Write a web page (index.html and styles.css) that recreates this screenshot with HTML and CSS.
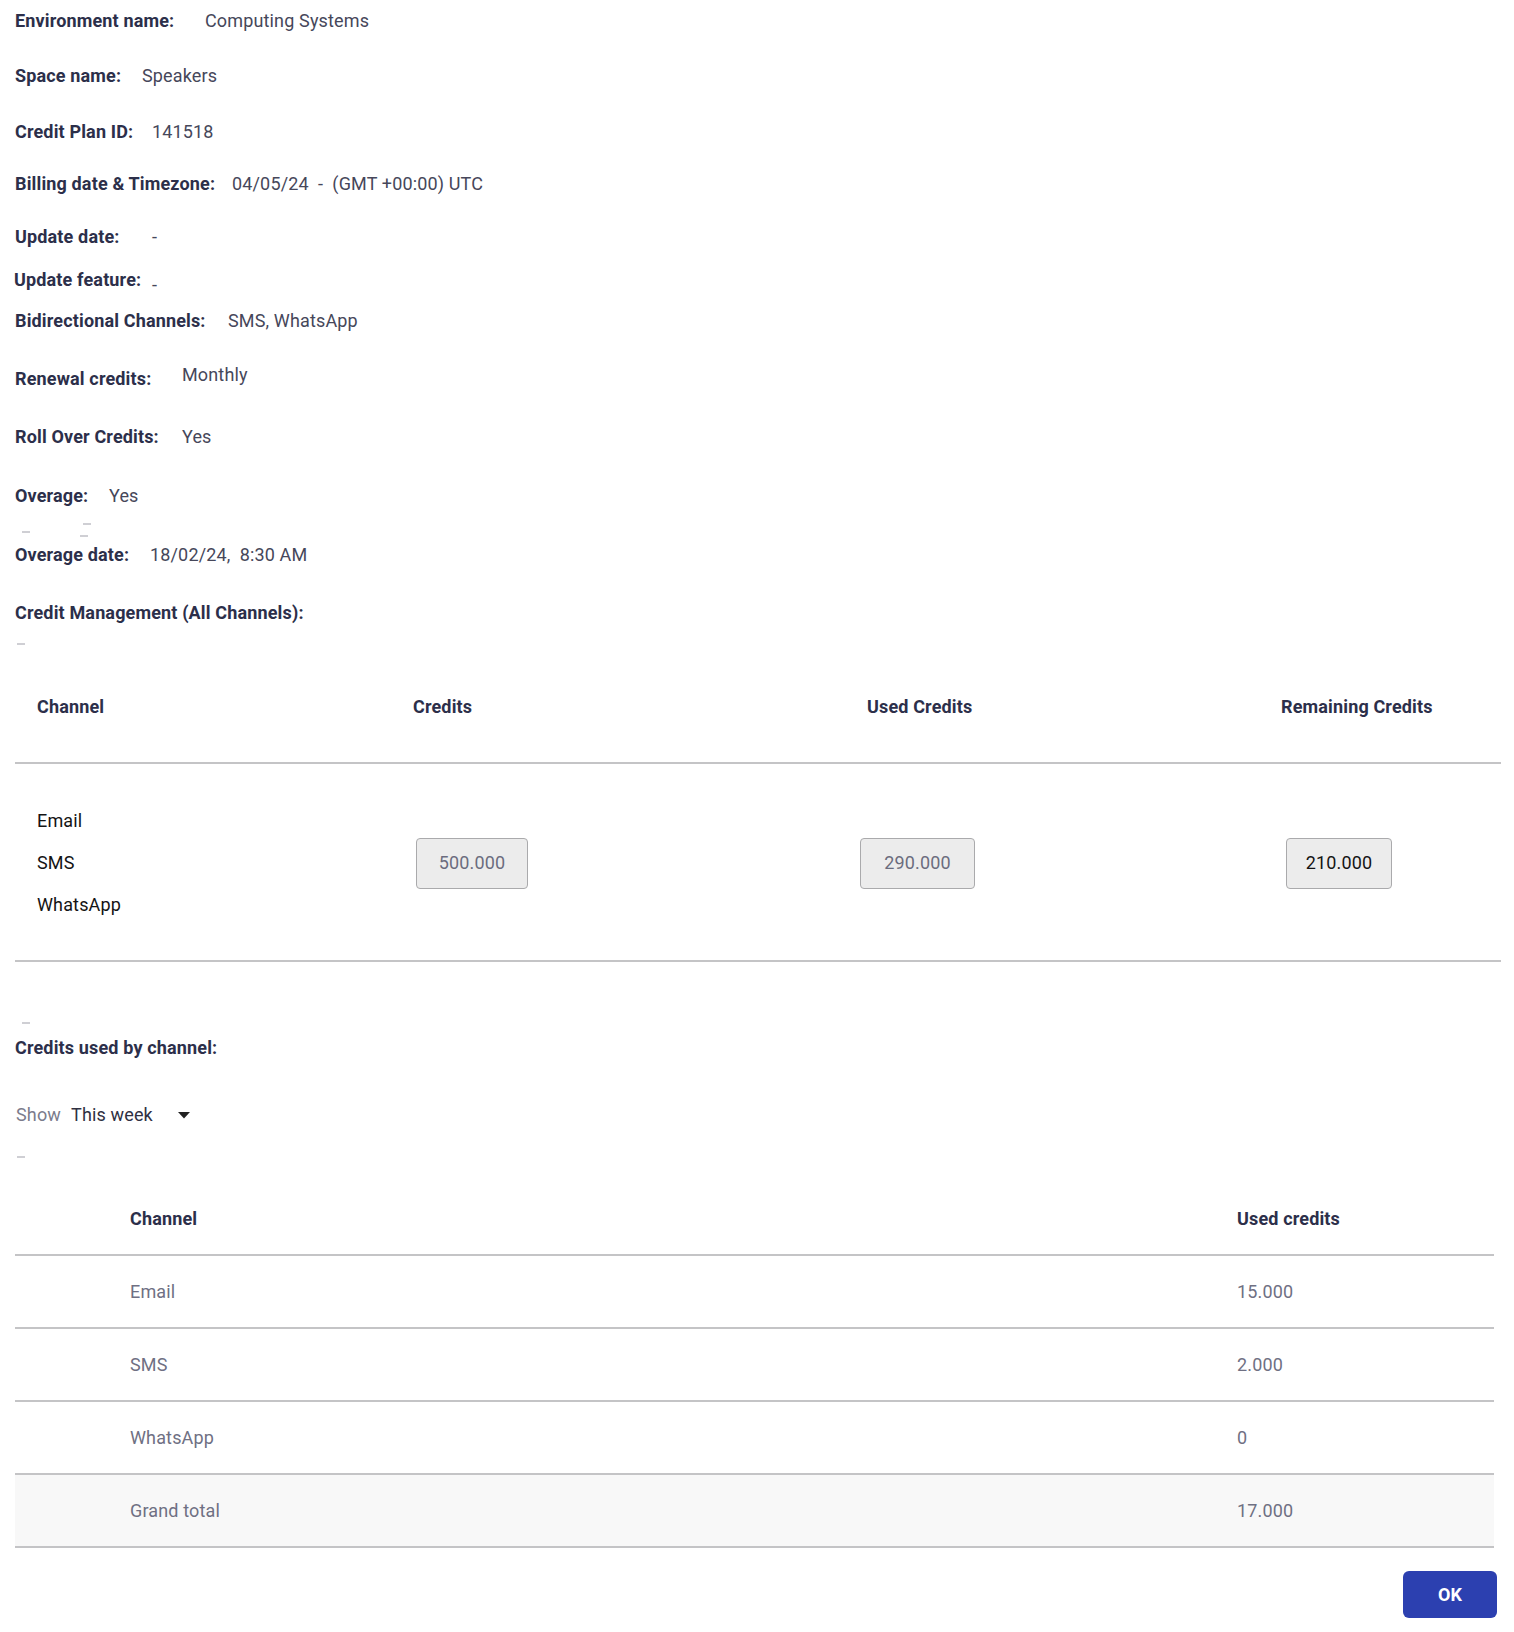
FILE: index.html
```html
<!DOCTYPE html>
<html lang="en">
<head>
<meta charset="utf-8">
<title>Credit plan details</title>
<link rel="stylesheet" href="styles.css">
</head>
<body>
<div class="page">
  <div class="info">
    <div class="row r-env"><span class="lbl w-env">Environment name:</span><span class="val">Computing Systems</span></div>
    <div class="row r-space"><span class="lbl w-space">Space name:</span><span class="val">Speakers</span></div>
    <div class="row r-plan"><span class="lbl w-plan">Credit Plan ID:</span><span class="val">141518</span></div>
    <div class="row r-billing"><span class="lbl w-billing">Billing date &amp; Timezone:</span><span class="val">04/05/24 &nbsp;- &nbsp;(GMT +00:00) UTC</span></div>
    <div class="row r-upd"><span class="lbl w-upd">Update date:</span><span class="val">-</span></div>
    <div class="row r-feat"><span class="lbl w-feat">Update feature:</span><span class="val val-low">-</span></div>
    <div class="row r-bidir"><span class="lbl w-bidir">Bidirectional Channels:</span><span class="val">SMS, WhatsApp</span></div>
    <div class="row r-renew"><span class="lbl w-renew">Renewal credits:</span><span class="val val-high">Monthly</span></div>
    <div class="row r-roll"><span class="lbl w-roll">Roll Over Credits:</span><span class="val">Yes</span></div>
    <div class="row r-over"><span class="lbl w-over">Overage:</span><span class="val">Yes</span></div>
    <div class="ticks">
      <span class="tick tick-a"></span>
      <span class="tick-group">
        <span class="tick tick-b"></span>
        <span class="tick tick-c"></span>
      </span>
    </div>
    <div class="row r-odate"><span class="lbl w-odate">Overage date:</span><span class="val">18/02/24, &nbsp;8:30 AM</span></div>
    <div class="row r-mgmt"><span class="lbl">Credit Management (All Channels):</span></div>
  </div>

  <span class="tick tick-mgmt"></span>

  <div class="ctable">
    <div class="ct-head">
      <div class="ct-c1">Channel</div>
      <div class="ct-c2">Credits</div>
      <div class="ct-c3 ct-h3">Used Credits</div>
      <div class="ct-c4">Remaining Credits</div>
    </div>
    <div class="ct-body">
      <div class="ct-c1 ct-names">
        <div>Email</div>
        <div>SMS</div>
        <div>WhatsApp</div>
      </div>
      <div class="ct-c2"><div class="box box-muted box-credits">500.000</div></div>
      <div class="ct-c3"><div class="box box-muted box-used">290.000</div></div>
      <div class="ct-c4"><div class="box box-remaining">210.000</div></div>
    </div>
  </div>

  <span class="tick tick-used"></span>
  <div class="heading">Credits used by channel:</div>

  <div class="show">
    <span class="show-lbl">Show</span>
    <span class="show-val">This week</span>
    <svg class="caret" width="12" height="7" viewBox="0 0 12 7" aria-hidden="true"><path d="M0 0 H12 L6 6.5 Z" fill="#222"/></svg>
  </div>

  <span class="tick tick-show"></span>

  <div class="utable">
    <div class="ut-row ut-head"><div class="ut-c1">Channel</div><div>Used credits</div></div>
    <div class="ut-row"><div class="ut-c1">Email</div><div>15.000</div></div>
    <div class="ut-row"><div class="ut-c1">SMS</div><div>2.000</div></div>
    <div class="ut-row"><div class="ut-c1">WhatsApp</div><div>0</div></div>
    <div class="ut-row ut-total"><div class="ut-c1">Grand total</div><div>17.000</div></div>
  </div>

  <div class="actions"><button class="ok" type="button">OK</button></div>
</div>
</body>
</html>
```

FILE: styles.css
```css
* { box-sizing: border-box; }

html, body {
  margin: 0;
  background: #ffffff;
}

body {
  font-family: Roboto, "Liberation Sans", Arial, sans-serif;
  font-size: 18px;
  letter-spacing: 0.15px;
  color: #2c2f4a;
}

.page {
  width: 1514px;
  padding: 0 15px;
}

/* ---------- info list ---------- */
.info {
  padding-top: 9px;
}

.row {
  display: flex;
  align-items: center;
  height: 24px;
  line-height: 24px;
  white-space: nowrap;
}

.lbl {
  flex: none;
  font-weight: 700;
  color: #2c2f4a;
}

.val {
  color: #46475a;
}

.val-low { margin-top: 9px; }
.val-high { margin-bottom: 9px; }

.r-space { margin-top: 31px; }
.r-plan { margin-top: 32px; }
.r-billing { margin-top: 28px; }
.r-upd { margin-top: 29px; }
.r-feat { margin-top: 19px; margin-left: -1px; }
.r-bidir { margin-top: 17px; }
.r-renew { margin-top: 34px; }
.r-roll { margin-top: 34px; }
.r-over { margin-top: 35px; }
.r-odate { margin-top: 1px; }
.r-mgmt { margin-top: 34px; }

.w-env { width: 190px; }
.w-space { width: 127px; }
.w-plan { width: 137px; }
.w-billing { width: 217px; }
.w-upd { width: 137px; }
.w-feat { width: 138px; }
.w-bidir { width: 213px; }
.w-renew { width: 167px; }
.w-roll { width: 167px; }
.w-over { width: 94px; }
.w-odate { width: 135px; }

/* ---------- small stray dashes ---------- */
.tick {
  display: block;
  width: 8px;
  height: 2px;
  background: #cfcfd4;
}

.ticks {
  display: flex;
  height: 34px;
}

.tick-a { margin: 23px 0 0 7px; }
.tick-group {
  display: flex;
  flex-direction: column;
  margin-left: 50px;
}
.tick-b { margin: 15px 0 0 3px; }
.tick-c { margin: 10px 0 0 0; }

.tick-mgmt { margin: 18px 0 0 2px; }
.tick-used { margin: 60px 0 0 7px; }
.tick-show { margin: 29px 0 0 2px; }

/* ---------- credit management table ---------- */
.ctable {
  margin-right: -2px;
}

.ct-head,
.ct-body {
  display: grid;
  grid-template-columns: 398px 447px 421px 1fr;
  border-bottom: 2px solid #c4c4c6;
}

.ct-head {
  padding: 50px 0 43px;
  line-height: 24px;
  font-weight: 700;
  color: #2c2f4a;
}

.ct-c1 { padding-left: 22px; }
.ct-h3 { padding-left: 7px; }

.ct-body {
  padding: 36px 0 34px;
  align-items: center;
}

.ct-names {
  line-height: 42px;
  color: #141414;
}

.box {
  height: 51px;
  line-height: 48px;
  text-align: center;
  background: #ececec;
  border: 1.5px solid #aaaaac;
  border-radius: 4px;
}

.box-muted { color: #6b6c7e; }
.box-credits { width: 112px; margin-left: 3px; }
.box-used { width: 115px; }
.box-remaining { width: 106px; margin-left: 5px; color: #141414; }

/* ---------- credits used by channel ---------- */
.heading {
  margin-top: 12px;
  line-height: 24px;
  font-weight: 700;
  color: #2c2f4a;
}

.show {
  display: flex;
  align-items: center;
  margin-top: 43px;
  height: 24px;
  line-height: 24px;
}

.show-lbl {
  color: #7b7c8c;
  margin-left: 1px;
}

.show-val {
  margin-left: 10px;
  color: #2f3042;
}

.caret {
  display: block;
  margin-left: 25px;
}

.utable {
  margin-right: 5px;
}

.ut-row {
  display: grid;
  grid-template-columns: 1222px 1fr;
  align-items: center;
  height: 73px;
  border-bottom: 2px solid #c4c4c6;
  color: #6f7083;
}

.ut-c1 { padding-left: 115px; }

.ut-head {
  height: auto;
  padding: 49px 0 23px;
  line-height: 24px;
  font-weight: 700;
  color: #2c2f4a;
}

.ut-total {
  background: #f8f8f8;
}

/* ---------- actions ---------- */
.actions {
  display: flex;
  justify-content: flex-end;
  margin-top: 23px;
  margin-right: 2px;
}

.ok {
  width: 94px;
  height: 47px;
  border: none;
  border-radius: 6px;
  background: #2c40b0;
  color: #ffffff;
  font-family: Roboto, "Liberation Sans", Arial, sans-serif;
  font-size: 18px;
  font-weight: 700;
  cursor: pointer;
}
```
